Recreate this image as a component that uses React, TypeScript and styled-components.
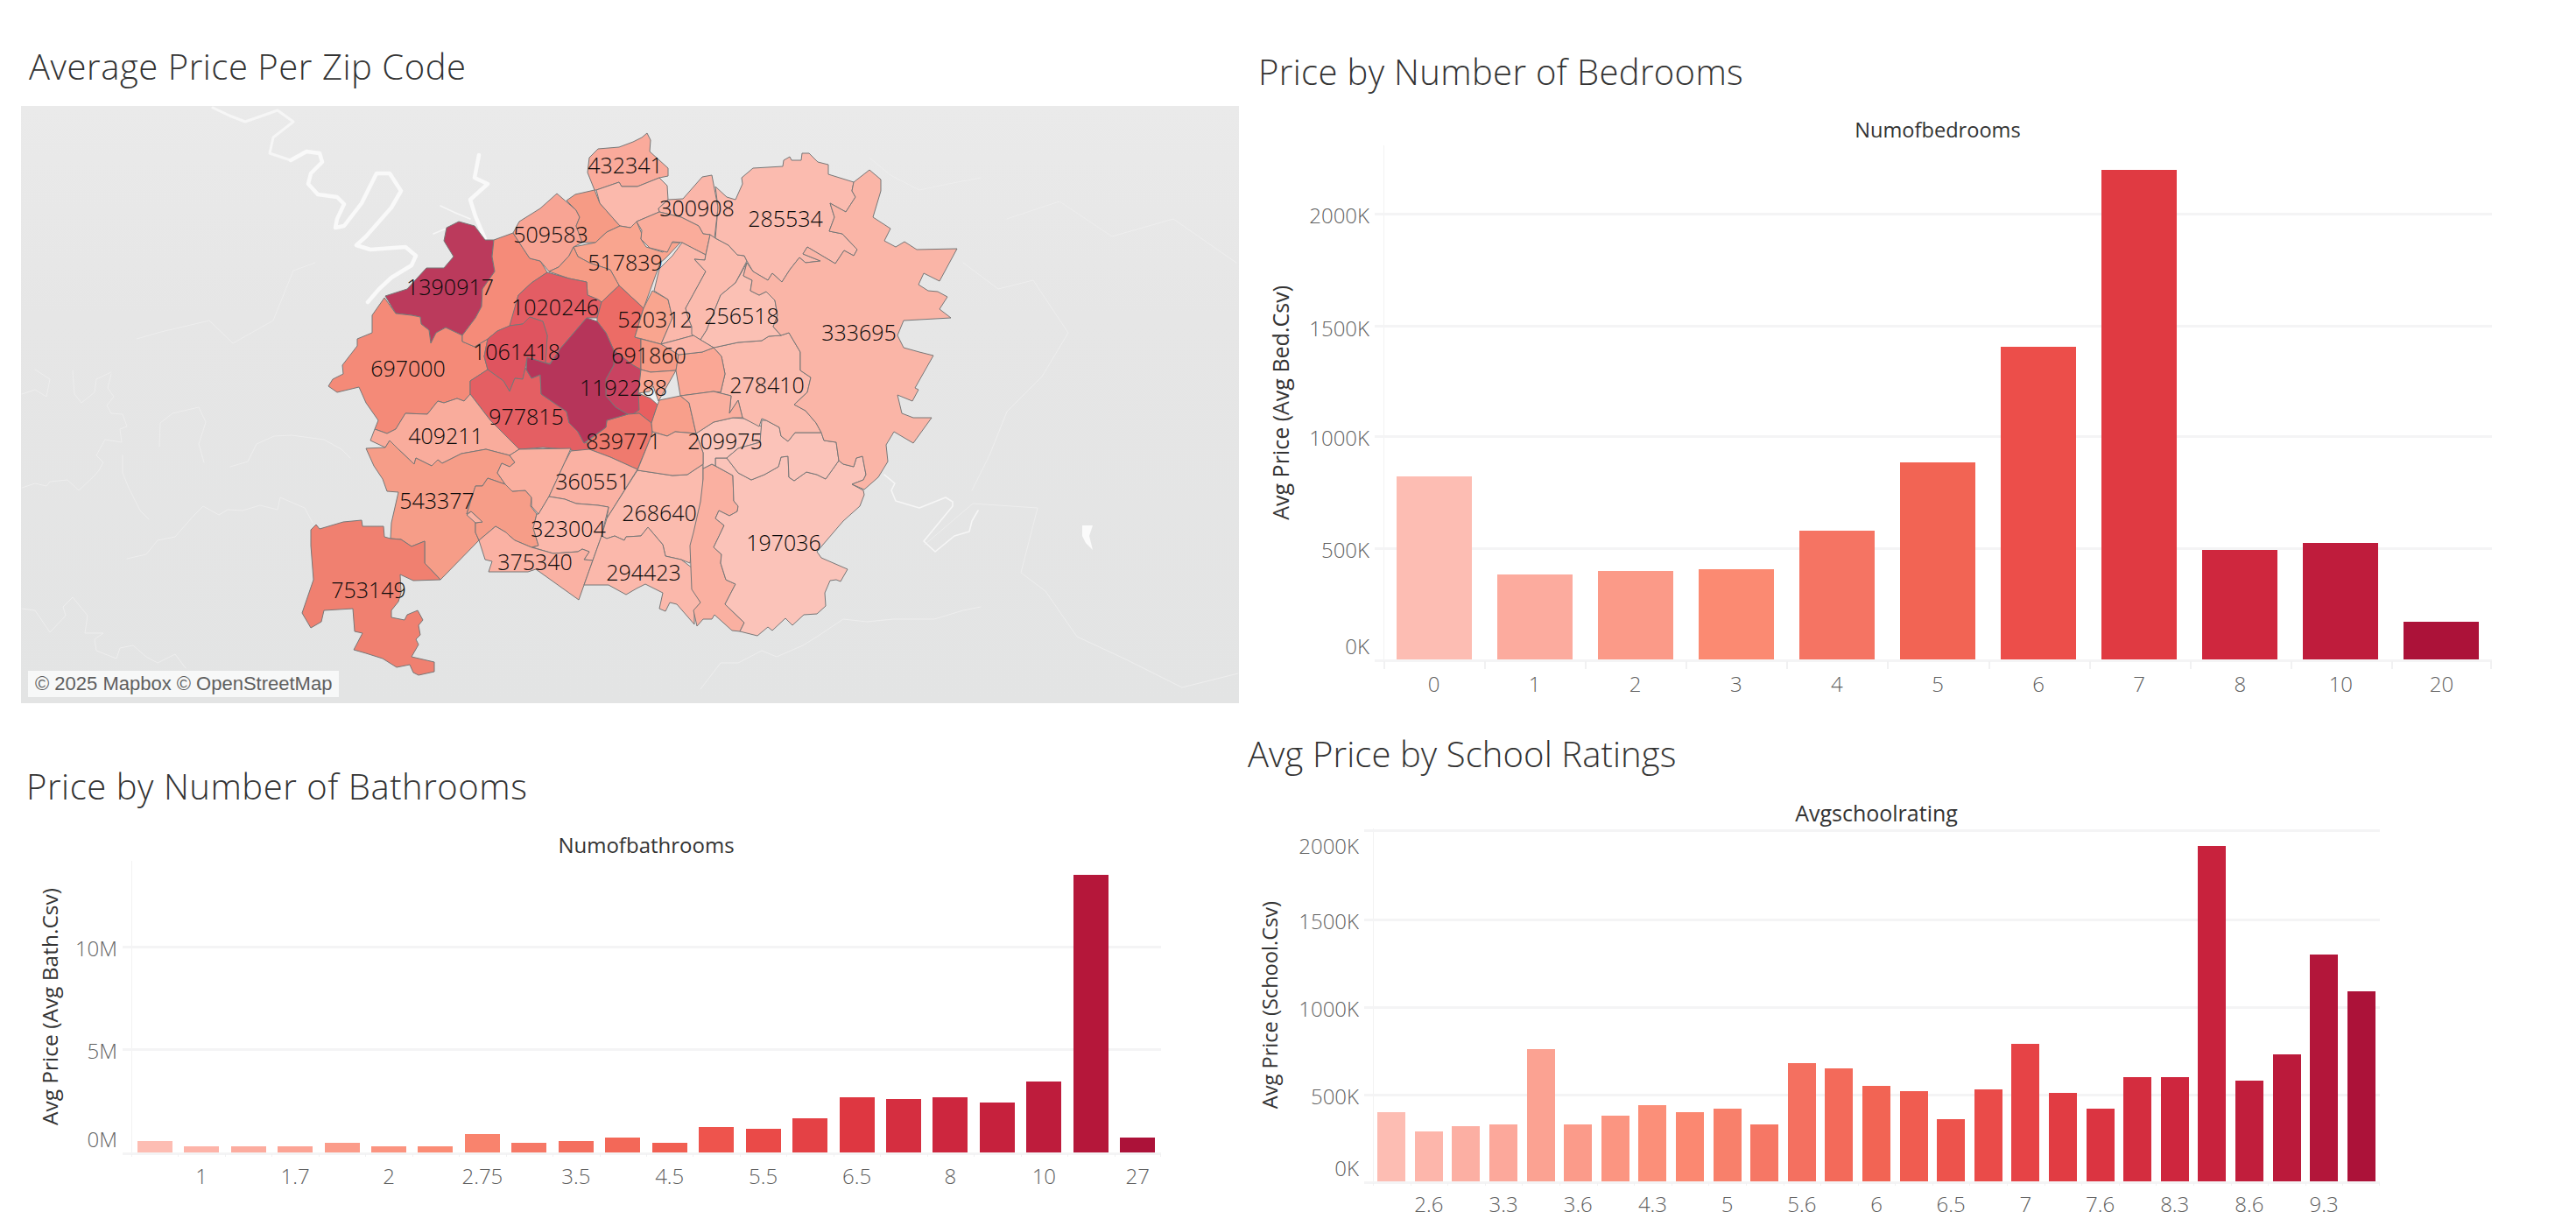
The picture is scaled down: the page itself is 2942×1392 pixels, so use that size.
import React from "react";
import styled, { createGlobalStyle } from "styled-components";

const Global = createGlobalStyle`
  html, body { margin: 0; padding: 0; background: #fff; overflow: hidden; }
  body { font-family: "Open Sans", "Noto Sans", sans-serif; }
`;

const Page = styled.div`
  width: 2942px;
  height: 1392px;
  display: grid;
  grid-template-columns: 1420px 1522px;
  overflow: hidden;
`;
const Column = styled.div`
  display: flex;
  flex-direction: column;
  min-width: 0;
`;
const Panel = styled.section<{ $top: number; $height: number }>`
  height: ${(p) => p.$height}px;
  padding-top: ${(p) => p.$top}px;
  box-sizing: border-box;
  flex: none;
`;
const Title = styled.h2<{ $x: number; $ls: number }>`
  margin: 0 0 0 ${(p) => p.$x}px;
  font-size: 40px;
  line-height: 56px;
  font-weight: 300;
  letter-spacing: ${(p) => p.$ls}px;
  color: #333;
  white-space: nowrap;
`;
const MapFrame = styled.div`
  position: relative;
  margin: 17px 0 0 24px;
  width: 1391px;
  height: 682px;
  background: linear-gradient(180deg, #eaeaea 0%, #e6e6e6 35%, #e3e4e4 100%);
  overflow: hidden;
`;
const MapSvg = styled.svg`
  display: block;
  width: 100%;
  height: 100%;
`;
const Attribution = styled.div`
  position: absolute;
  left: 8px;
  bottom: 7px;
  width: 355px;
  height: 30px;
  background: rgba(255, 255, 255, 0.72);
  color: #5f5f5f;
  font-family: "Liberation Sans", Arial, sans-serif;
  font-size: 22px;
  line-height: 30px;
  padding-left: 8px;
  box-sizing: border-box;
  white-space: nowrap;
`;
const ChartGrid = styled.div<{ $pad: number; $gap: number; $label: number; $plot: number; $h: number; $x: number }>`
  display: grid;
  margin: ${(p) => p.$gap}px 0 0 ${(p) => p.$pad}px;
  grid-template-columns: 44px ${(p) => p.$label}px ${(p) => p.$plot}px;
  grid-template-rows: 36px ${(p) => p.$h}px ${(p) => p.$x}px;
`;
const Header = styled.div<{ $size: number }>`
  grid-column: 3;
  grid-row: 1;
  text-align: center;
  font-size: ${(p) => p.$size}px;
  line-height: 36px;
  color: #333;
`;
const AxisTitleCell = styled.div`
  grid-column: 1;
  grid-row: 2;
  display: flex;
  align-items: center;
  justify-content: center;
`;
const AxisTitle = styled.span<{ $size: number }>`
  writing-mode: vertical-rl;
  transform: rotate(180deg);
  font-size: ${(p) => p.$size}px;
  line-height: 30px;
  color: #333;
  white-space: nowrap;
`;
const YAxis = styled.div`
  grid-column: 2;
  grid-row: 2;
  position: relative;
`;
const YLabel = styled.span`
  position: absolute;
  right: 16px;
  transform: translateY(-50%);
  font-size: 24px;
  line-height: 30px;
  font-weight: 300;
  color: #5f5f5f;
`;
const Plot = styled.div`
  grid-column: 3;
  grid-row: 2;
  position: relative;
  border-left: 1px solid #f2f2f2;
  box-sizing: border-box;
`;
const GridLine = styled.div`
  position: absolute;
  left: -11px;
  right: 0;
  height: 3px;
  margin-top: -1px;
  background: #f4f4f5;
`;
const BarRow = styled.div<{ $n: number }>`
  position: absolute;
  inset: 0 0 1px -1px;
  display: grid;
  grid-template-columns: repeat(${(p) => p.$n}, 1fr);
  align-items: end;
  justify-items: center;
`;
const Bar = styled.div<{ $w: number }>`
  width: ${(p) => p.$w}px;
`;
const XAxis = styled.div<{ $n: number }>`
  grid-column: 3;
  grid-row: 3;
  display: grid;
  grid-template-columns: repeat(${(p) => p.$n}, 1fr);
  position: relative;
`;
const XCell = styled.div<{ $tick: number; $top: number; $width: number }>`
  position: relative;
  text-align: center;
  font-size: 24px;
  font-weight: 300;
  line-height: 28px;
  color: #5f5f5f;
  padding-top: ${(p) => p.$top}px;
  white-space: nowrap;
  &::before,
  &:last-child::after {
    content: "";
    position: absolute;
    top: 1px;
    left: 0;
    width: ${(p) => p.$width}px;
    height: ${(p) => p.$tick}px;
    background: #f1f1f2;
  }
  &:last-child::after {
    left: auto;
    right: 0;
  }
`;

type Tick = { t: string; y: number };
type ChartProps = {
  header: string;
  headerSize: number;
  axis: string;
  axisSize: number;
  pad: number;
  gap: number;
  label: number;
  plot: number;
  h: number;
  xh: number;
  barW: number;
  bars: number[];
  labels: string[];
  lines: number[];
  ticks: Tick[];
  tick: number;
  tickW: number;
  lblTop: number;
};

const stops = ["#fdbdb3", "#fcab9e", "#fb9a88", "#fb8a72", "#f57463", "#f26454", "#ec4e4a", "#e03a42", "#cf273e", "#bf1c3c", "#ac1239"];
const hex = (s: string) => [1, 3, 5].map((i) => parseInt(s.slice(i, i + 2), 16));
const colorAt = (t: number) => {
  const p = t * (stops.length - 1);
  const i = Math.min(Math.floor(p), stops.length - 2);
  const a = hex(stops[i]);
  const b = hex(stops[i + 1]);
  const f = p - i;
  return `rgb(${a.map((v, k) => Math.round(v + (b[k] - v) * f)).join(",")})`;
};

const Chart = (c: ChartProps) => (
  <ChartGrid $pad={c.pad} $gap={c.gap} $label={c.label} $plot={c.plot} $h={c.h} $x={c.xh}>
    <Header $size={c.headerSize}>{c.header}</Header>
    <AxisTitleCell>
      <AxisTitle $size={c.axisSize}>{c.axis}</AxisTitle>
    </AxisTitleCell>
    <YAxis>
      {c.ticks.map((k) => (
        <YLabel key={k.t} style={{ top: k.y }}>
          {k.t}
        </YLabel>
      ))}
    </YAxis>
    <Plot>
      {c.lines.map((y) => (
        <GridLine key={y} style={{ top: y }} />
      ))}
      <BarRow $n={c.bars.length}>
        {c.bars.map((h, i) => (
          <Bar key={i} $w={c.barW} style={{ height: h, background: colorAt(i / (c.bars.length - 1)) }} />
        ))}
      </BarRow>
    </Plot>
    <XAxis $n={c.bars.length}>
      {c.labels.map((l, i) => (
        <XCell key={i} $tick={c.tick} $width={c.tickW} $top={c.lblTop}>
          {l}
        </XCell>
      ))}
    </XAxis>
  </ChartGrid>
);

const evenLabels = (n: number, list: string[]) =>
  Array.from({ length: n }, (_, i) => (i % 2 === 1 ? list[(i - 1) / 2] ?? "" : ""));

type Zone = { f: string; p: string };
const zones: Zone[] = [
  { f: "#bb3a5c", p: "440,338 465,330 487,306 507,306 518,293 507,275 510,260 524,253 542,258 554,274 564,274 562,293 565,310 551,330 550,350 543,363 528,383 509,374 498,380 492,392 490,377 481,370 480,362 470,360 452,358" },
  { f: "#f48a78", p: "439,340 452,358 470,360 480,362 481,370 490,377 492,392 498,380 509,374 528,383 528,390 542,396 557,387 553,407 557,422 537,435 537,450 530,458 522,455 507,460 500,458 488,473 463,472 452,490 442,495 428,490 432,480 418,460 410,442 385,448 375,441 380,433 392,427 391,417 408,395 408,387 425,380 425,360" },
  { f: "#f58b79", p: "564,274 586,266 597,283 605,295 617,298 625,311 607,323 592,337 583,372 568,378 557,387 542,396 528,390 528,383 543,363 550,350 551,330 565,310 562,293" },
  { f: "#f8a494", p: "593,253 617,238 636,221 658,240 662,248 658,258 665,277 655,282 650,292 638,305 627,310 617,298 605,295 597,283 586,266" },
  { f: "#f69b85", p: "647,229 657,222 679,217 685,232 708,258 693,265 680,277 665,277 658,258 662,248 658,240" },
  { f: "#faaa9b", p: "679,217 671,197 673,180 683,170 707,168 723,162 733,157 739,152 743,160 742,173 763,192 763,201 753,203 728,213 710,213 707,208 681,217" },
  { f: "#fbb9ac", p: "681,217 707,208 710,213 728,213 753,203 762,212 763,228 752,238 753,242 727,253 720,260 708,258 685,232" },
  { f: "#f9a58f", p: "655,282 680,277 693,265 708,258 720,260 727,253 733,267 732,273 738,282 757,288 767,277 777,277 760,295 754,300 735,352 707,326 697,308 673,300 660,293" },
  { f: "#f69b85", p: "655,282 660,293 673,300 697,308 707,326 687,345 683,342 671,337 670,322 650,318 627,310 638,305 650,292" },
  { f: "#e35d64", p: "625,311 650,318 670,322 671,337 683,342 687,345 682,363 670,363 658,377 640,398 628,415 623,415 625,383 620,367 605,362 597,370 582,372 592,337 607,323" },
  { f: "#df545f", p: "582,372 597,370 605,362 620,367 625,383 623,415 628,416 615,412 602,408 600,420 597,433 588,432 582,447 575,435 557,422 553,407 557,387 568,378" },
  { f: "#ec6c66", p: "687,345 707,326 735,352 725,385 732,387 732,422 723,417 701,400 692,380 682,367 682,363" },
  { f: "#c94361", p: "701,400 723,417 732,422 730,468 723,473 717,473 703,465 692,452 692,433 701,417" },
  { f: "#e85f60", p: "729,449 743,455 751,462 744,483 730,472 723,473 730,468" },
  { f: "#f9a58f", p: "745,332 763,342 768,363 755,393 733,387 725,385 735,352" },
  { f: "#f69a85", p: "732,387 755,393 775,405 772,423 743,425 732,422" },
  { f: "#f9a894", p: "732,422 743,425 772,423 752,458 746,441 742,447 729,449" },
  { f: "#ef7a6e", p: "744,483 730,472 717,473 693,480 692,488 670,505 673,513 697,522 728,536 745,495" },
  { f: "#e45f63", p: "537,435 557,422 575,435 582,447 588,432 597,433 600,420 607,432 617,428 618,450 647,470 650,483 660,493 667,506 670,505 673,513 663,516 647,513 620,511 593,513 560,480 537,450" },
  { f: "#b6355a", p: "670,363 682,367 692,380 701,400 701,417 692,433 692,452 703,465 717,473 693,480 692,488 667,506 660,493 650,483 647,470 618,450 617,428 607,432 601,422 602,408 615,412 628,416 640,398 658,377" },
  { f: "#f9ac9c", p: "530,458 522,455 507,460 500,458 488,473 463,472 452,490 442,495 428,490 423,503 440,511 445,503 455,513 473,530 475,523 493,532 500,525 505,529 527,518 555,513 582,520 593,513 560,480 537,450" },
  { f: "#f69d88", p: "418,512 440,511 445,503 455,513 473,530 475,523 493,532 500,525 505,529 527,518 555,513 582,520 588,528 582,533 573,529 568,540 577,553 557,546 551,555 543,555 533,587 543,597 543,608 547,617 503,662 485,643 485,618 470,624 458,616 446,615 447,597 455,562 442,561 437,547 427,532" },
  { f: "#f08070", p: "361,599 365,604 392,596 413,594 414,601 438,601 439,613 446,615 458,616 470,624 485,618 485,643 503,662 472,663 457,656 458,677 455,687 447,697 447,705 462,708 465,702 477,697 483,708 478,714 480,725 475,730 478,736 470,750 496,756 496,767 478,771 472,768 468,759 453,762 437,752 418,746 404,742 414,723 405,721 403,695 370,697 367,710 355,717 345,700 358,662 355,623 355,605" },
  { f: "#f69d88", p: "557,546 577,553 585,561 600,560 607,568 606,578 613,587 609,603 615,623 607,625 588,617 582,612 578,608 566,601 547,617 543,608 543,597 551,596 538,584 533,587 543,555 551,555" },
  { f: "#fab3a4", p: "538,584 551,596 543,597 533,588" },
  { f: "#faaf9f", p: "582,520 593,513 652,512 645,528 627,567 615,587 607,578 607,568 600,560 585,561 577,553 568,540 573,529 582,533 588,528" },
  { f: "#fab1a3", p: "652,515 673,513 697,522 728,536 693,592 695,579 683,577 658,575 645,570 627,567 645,528" },
  { f: "#fbb8ab", p: "627,567 645,570 658,575 683,577 695,579 687,612 677,640 667,639 673,630 665,627 660,630 632,632 608,625 615,623 609,603 613,587 615,587" },
  { f: "#fab1a3", p: "547,617 566,601 578,608 582,612 588,617 607,625 632,632 660,630 665,627 673,630 667,639 677,640 667,668 661,685 612,650 603,653 558,653 562,641 554,639" },
  { f: "#fbbbae", p: "728,537 768,543 785,542 803,530 803,560 797,590 792,613 788,643 778,639 760,635 757,622 740,602 732,612 715,613 713,617 702,612 693,615 687,612 693,592" },
  { f: "#fbb8ab", p: "687,612 693,615 702,612 713,617 715,613 732,612 740,602 757,622 760,635 778,639 795,652 791,670 800,688 793,697 793,713 773,690 765,688 760,698 753,695 757,677 737,667 727,672 715,679 695,668 667,668" },
  { f: "#fab0a1", p: "803,535 813,530 837,543 838,572 843,578 842,584 833,589 821,583 817,592 827,600 815,625 824,633 823,643 829,662 840,667 828,690 850,711 845,721 836,720 816,702 813,707 803,707 796,715 792,697 800,688 790,673 788,623 792,608 800,573 803,547" },
  { f: "#fbc3b9", p: "830,523 843,540 858,548 873,542 889,533 892,522 900,521 901,545 907,549 921,539 933,542 943,547 958,526 963,530 975,533 978,523 985,521 989,542 986,548 973,553 986,560 987,565 982,578 963,595 933,630 938,637 968,650 960,664 955,662 948,663 942,677 943,692 933,701 918,702 905,714 897,706 882,720 877,716 865,726 845,721 850,711 828,690 840,667 829,662 823,643 824,633 815,625 827,600 817,592 821,583 833,589 842,584 843,578 838,572 837,543 817,532 817,523" },
  { f: "#fbc6bc", p: "795,495 803,517 803,535 813,530 817,532 817,523 830,523 843,512 868,505 870,487 850,478 837,477 815,482" },
  { f: "#fbc3b9", p: "830,523 843,512 868,505 870,480 875,480 890,488 892,498 900,504 908,494 938,494 941,503 955,505 958,526 943,547 933,542 921,539 907,549 901,545 900,521 892,522 889,533 873,542 858,548 843,540" },
  { f: "#fbbbae", p: "815,397 843,391 870,389 878,384 892,383 901,380 914,402 914,423 926,431 922,448 907,462 920,469 932,483 938,494 908,494 900,504 892,498 890,488 875,480 870,478 867,487 848,477 843,457 833,472 835,452 815,447 823,448 828,427 824,407" },
  { f: "#faa795", p: "775,405 802,402 815,397 824,407 828,427 823,448 815,447 777,452 772,423" },
  { f: "#f89f8b", p: "753,457 777,452 787,460 795,495 771,493 762,498 745,493 744,483 751,462" },
  { f: "#faaf9f", p: "777,452 815,447 835,452 833,472 843,457 848,477 837,477 815,482 795,495 787,460" },
  { f: "#fab0a0", p: "745,493 762,498 771,493 795,495 803,517 803,530 785,542 768,543 728,537 745,495" },
  { f: "#fbb6a9", p: "763,228 780,227 802,202 813,200 820,237 816,272 811,268 803,267 798,258 778,248 753,242 752,238" },
  { f: "#faac9b", p: "727,253 753,242 778,248 798,258 803,267 811,268 806,291 779,277 768,276 762,288 742,283 732,273 733,263" },
  { f: "#fbb8ab", p: "779,277 806,291 805,297 793,296 806,310 783,352 786,363 790,373 792,383 755,393 768,363 763,342 747,332 753,307 768,292" },
  { f: "#fbbbae", p: "811,268 817,272 832,280 842,291 850,292 853,298 840,323 823,337 819,347 807,377 800,388 790,382 790,373 786,363 783,352 806,310 793,296 805,297 806,291" },
  { f: "#fbc0b4", p: "853,300 849,315 859,320 857,332 867,337 875,333 885,343 888,360 883,373 892,383 878,384 870,389 843,391 815,397 800,388 807,377 819,347 823,337 840,323" },
  { f: "#fbb5a8", p: "755,393 792,383 800,388 815,397 802,402 775,405" },
  { f: "#fbbbaf", p: "817,213 830,225 840,228 848,210 847,203 860,192 894,190 895,183 902,179 904,183 915,183 916,175 924,175 934,185 946,188 946,199 975,208 973,218 977,225 966,242 948,232 953,248 947,264 962,267 979,285 975,292 964,286 954,301 922,282 917,290 937,298 920,300 913,294 902,308 893,322 882,312 877,320 860,310 853,298 850,292 842,291 832,280 817,272 820,237" },
  { f: "#fab5a7", p: "975,208 993,194 1006,205 1006,218 997,248 1017,261 1010,275 1023,282 1033,276 1047,285 1093,284 1073,321 1055,312 1049,325 1060,332 1071,333 1082,339 1073,353 1086,363 1032,366 1025,383 1032,397 1050,402 1066,406 1045,443 1049,445 1042,458 1025,451 1030,472 1043,477 1064,477 1043,506 1021,493 1012,508 1014,527 1003,545 987,559 973,553 986,548 989,542 985,521 978,523 975,533 963,530 958,526 955,505 941,503 938,494 932,483 920,469 907,462 922,448 926,431 914,423 914,402 901,380 892,383 883,373 888,360 885,343 875,333 867,337 857,332 859,320 849,315 853,300 860,310 877,320 882,312 893,322 902,308 913,294 920,300 937,298 917,290 922,282 954,301 964,286 975,292 979,285 962,267 947,264 953,248 948,232 966,242 977,225 973,218" },
];

const mainRivers = [
  "332,183 350,173 365,175 368,185 355,198 352,210 363,222 385,225 393,233 385,250 383,260 393,258 413,232 430,198 445,198 458,218 447,237 418,270 407,280 423,285 463,282 475,292 470,303 447,317 433,330 420,345",
  "547,177 542,203 557,210 537,228 543,247 554,273",
];
const thinRivers = [
  "243,123 262,132 280,139 300,132 317,126 335,139 312,157 308,175 332,183",
  "503,235 520,243 537,250",
  "495,267 507,262 525,256",
  "1010,542 1022,552 1018,560 1023,572 1043,578 1050,580 1080,568 1088,573 1088,578 1055,618 1068,630 1090,612 1107,607 1110,595 1117,583",
];
const faint = [
  "25,450 40,445 53,453 57,433 40,422",
  "83,423 85,450 93,460 108,448 110,433 127,425",
  "127,427 123,443 130,453 122,463 127,472 140,473 145,487 137,490 139,505 120,502 110,520 118,528 113,537 108,543 90,560 77,548 57,550 53,555 40,552 25,557",
  "140,520 140,540 147,557 160,583 170,593",
  "145,638 167,633 180,617 200,613 220,590 232,578 250,588 260,582 277,583 297,577 317,582 320,568 348,580 357,597",
  "182,510 183,483 197,472 227,465 235,482 227,507 233,528",
  "263,533 283,527 293,507 313,498 333,497 370,502 390,513 400,523",
  "25,695 40,697 57,722 75,703 72,693 83,682 100,703 97,723 118,723 108,730 110,743 133,752 137,740 152,737 167,750 180,757 200,747 212,763",
  "993,180 1017,200 1050,217 1083,210 1120,203",
  "800,787 823,757 843,757 870,743 887,750 917,737 933,727 963,707 990,710 1020,707 1067,707 1100,697 1120,693",
  "1056,622 1111,575 1185,580 1166,654 1194,675 1230,727 1286,753 1350,785 1414,769",
  "156,387 184,379 239,366 266,392 312,366 335,309 360,300",
  "1100,300 1140,330 1180,320 1220,380 1190,430 1150,470 1130,520 1110,560",
  "1150,250 1210,230 1270,270 1340,250 1412,300",
];

const zipLabels: [string, number, number][] = [
  ["432341", 714, 189], ["300908", 796, 238], ["285534", 897, 250], ["509583", 629, 268],
  ["517839", 714, 300], ["1390917", 514, 328], ["1020246", 634, 351], ["520312", 748, 365],
  ["256518", 847, 361], ["333695", 981, 380], ["1061418", 590, 402], ["691860", 741, 406],
  ["697000", 466, 421], ["1192288", 712, 443], ["278410", 876, 440], ["977815", 601, 476],
  ["409211", 509, 498], ["839771", 712, 504], ["209975", 828, 504], ["360551", 677, 550],
  ["543377", 499, 572], ["268640", 753, 586], ["323004", 649, 604], ["197036", 895, 620],
  ["375340", 611, 642], ["294423", 735, 654], ["753149", 421, 674],
];

const PriceMap = () => (
  <MapFrame>
    <MapSvg viewBox="24 121 1391 682" preserveAspectRatio="none">
      <g fill="none" strokeLinejoin="round" strokeLinecap="round">
        {faint.map((p, i) => (
          <polyline key={i} points={p} stroke="#eeeeee" strokeWidth={1} />
        ))}
        {thinRivers.map((p, i) => (
          <polyline key={i} points={p} stroke="#f6f6f6" strokeWidth={i === 0 ? 3 : 1.6} />
        ))}
        {mainRivers.map((p, i) => (
          <polyline key={i} points={p} stroke="#f9f9f9" strokeWidth={4.5} />
        ))}
      </g>
      <polygon points="1236,600 1248,600 1244,612 1248,628 1240,620 1236,612" fill="#fbfbfb" />
      <polygon points="742,447 746,441 753,447 751,462 743,455" fill="#eef0f0" />
      <g stroke="#777777" strokeWidth={1} strokeLinejoin="round">
        {zones.map((z, i) => (
          <polygon key={i} points={z.p} fill={z.f} />
        ))}
      </g>
      <g fontFamily="'Open Sans', sans-serif" fontSize={25} fontWeight={360} fill="#0a0a0a" textAnchor="middle">
        {zipLabels.map(([t, x, y]) => (
          <text key={t} x={x} y={y + 9}>
            {t}
          </text>
        ))}
      </g>
    </MapSvg>
    <Attribution>© 2025 Mapbox © OpenStreetMap</Attribution>
  </MapFrame>
);

const bedChart: ChartProps = {
  header: "Numofbedrooms",
  headerSize: 23.6,
  axis: "Avg Price (Avg Bed.Csv)",
  axisSize: 25,
  pad: 20,
  gap: 20,
  label: 96,
  plot: 1266,
  h: 588,
  xh: 56,
  barW: 86,
  bars: [209, 97, 101, 103, 147, 225, 357, 559, 125, 133, 43],
  labels: ["0", "1", "2", "3", "4", "5", "6", "7", "8", "10", "20"],
  lines: [77.6, 205.5, 331.7, 459.6, 588],
  ticks: [
    { t: "2000K", y: 80 },
    { t: "1500K", y: 208.5 },
    { t: "1000K", y: 333.5 },
    { t: "500K", y: 461.5 },
    { t: "0K", y: 572 },
  ],
  tick: 9,
  tickW: 2,
  lblTop: 13,
};

const bathChart: ChartProps = {
  header: "Numofbathrooms",
  headerSize: 24,
  axis: "Avg Price (Avg Bath.Csv)",
  axisSize: 24.5,
  pad: 35,
  gap: 21,
  label: 71,
  plot: 1176,
  h: 334,
  xh: 50,
  barW: 40,
  bars: [13, 7, 7, 7, 11, 7, 7, 21, 11, 13, 17, 11, 29, 27, 39, 63, 61, 63, 57, 81, 317, 17],
  labels: evenLabels(22, ["1", "1.7", "2", "2.75", "3.5", "4.5", "5.5", "6.5", "8", "10", "27"]),
  lines: [97.6, 215, 334],
  ticks: [
    { t: "10M", y: 100 },
    { t: "5M", y: 217 },
    { t: "0M", y: 318 },
  ],
  tick: 3,
  tickW: 1,
  lblTop: 12,
};

const schoolChart: ChartProps = {
  header: "Avgschoolrating",
  headerSize: 25,
  axis: "Avg Price (School.Csv)",
  axisSize: 23.6,
  pad: 8,
  gap: 21,
  label: 96,
  plot: 1150,
  h: 404,
  xh: 42,
  barW: 32,
  bars: [79, 57, 63, 65, 151, 65, 75, 87, 79, 83, 65, 135, 129, 109, 103, 71, 105, 157, 101, 83, 119, 119, 383, 115, 145, 259, 217],
  labels: evenLabels(27, ["2.6", "3.3", "3.6", "4.3", "5", "5.6", "6", "6.5", "7", "7.6", "8.3", "8.6", "9.3"]),
  lines: [2, 104, 204, 304, 404],
  ticks: [
    { t: "2000K", y: 20 },
    { t: "1500K", y: 106 },
    { t: "1000K", y: 206 },
    { t: "500K", y: 305.5 },
    { t: "0K", y: 387.6 },
  ],
  tick: 3,
  tickW: 1,
  lblTop: 11,
};

export default function App() {
  return (
    <>
      <Global />
      <Page>
        <Column>
          <Panel $top={48} $height={820}>
            <Title $x={33} $ls={0.55}>Average Price Per Zip Code</Title>
            <PriceMap />
          </Panel>
          <Panel $top={50} $height={572}>
            <Title $x={30} $ls={0.55}>Price by Number of Bathrooms</Title>
            <Chart {...bathChart} />
          </Panel>
        </Column>
        <Column>
          <Panel $top={54} $height={810}>
            <Title $x={17} $ls={0.35}>Price by Number of Bedrooms</Title>
            <Chart {...bedChart} />
          </Panel>
          <Panel $top={23} $height={582}>
            <Title $x={5} $ls={0.1}>Avg Price by School Ratings</Title>
            <Chart {...schoolChart} />
          </Panel>
        </Column>
      </Page>
    </>
  );
}
